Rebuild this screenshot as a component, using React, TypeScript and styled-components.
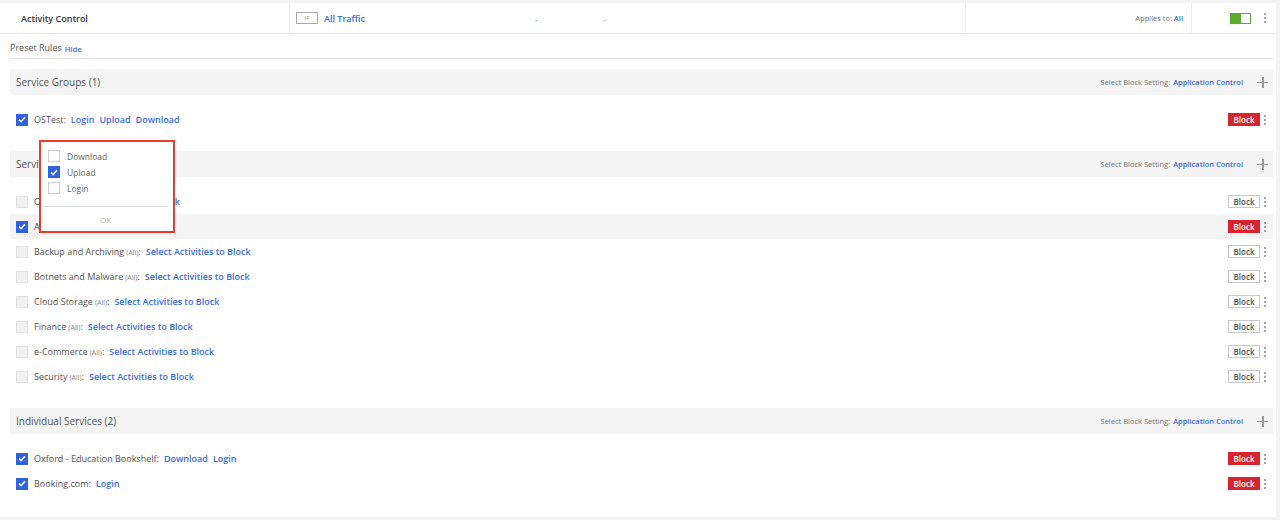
import React from "react";
import styled, { createGlobalStyle, css } from "styled-components";

const Global = createGlobalStyle`
  html, body { margin: 0; padding: 0; }
  body {
    background: #f3f3f3;
    font-family: "Open Sans", "Liberation Sans", sans-serif;
    color: #555;
  }
  * { box-sizing: border-box; }
`;

const BLUE = "#3a6ee8";

const Page = styled.div`
  width: 1280px;
  height: 520px;
  padding: 3px 4px 3px 0;
`;

const Card = styled.div`
  background: #fff;
  width: 1276px;
  height: 514px;
  overflow: hidden;
`;

const TopRow = styled.div`
  display: grid;
  grid-template-columns: 289px 676px 226px 85px;
  height: 31px;
  border-bottom: 1px solid #e9e9e9;
`;

const Cell = styled.div<{ $first?: boolean; $right?: boolean }>`
  display: flex;
  align-items: center;
  border-left: ${(p) => (p.$first ? "none" : "1px solid #efefef")};
  justify-content: ${(p) => (p.$right ? "flex-end" : "flex-start")};
`;

const Title = styled.div`
  font-size: 9px;
  font-weight: 600;
  color: #333;
  padding-left: 21px;
`;

const IfBox = styled.span`
  margin-left: 6px;
  width: 22px;
  height: 12px;
  border: 1px solid #aaa;
  font-size: 6px;
  color: #aaa;
  display: flex;
  align-items: center;
  justify-content: center;
`;

const Link = styled.span<{ $size?: number }>`
  color: ${BLUE};
  font-weight: 600;
  font-size: ${(p) => p.$size ?? 9}px;
`;

const Dash = styled.span<{ $gray?: boolean; $left: number }>`
  color: ${(p) => (p.$gray ? "#999" : BLUE)};
  font-size: 8px;
  margin-left: ${(p) => p.$left}px;
`;

const AppliesText = styled.span`
  font-size: 7.5px;
  color: #777;
  padding-right: 8px;
`;

const Toggle = styled.span`
  margin-left: 38px;
  width: 21px;
  height: 11px;
  border: 1px solid #5aac2e;
  background: linear-gradient(90deg, #5aac2e 0 55%, #fff 55% 100%);
`;

const Kebab = styled.span<{ $ml?: number }>`
  display: flex;
  flex-direction: column;
  gap: 2px;
  margin-left: ${(p) => p.$ml ?? 4}px;
  & > i {
    display: block;
    width: 2px;
    height: 2px;
    background: #888;
    border-radius: 1px;
  }
`;

const Dots = ({ ml }: { ml?: number }) => (
  <Kebab $ml={ml}>
    <i />
    <i />
    <i />
  </Kebab>
);

const Body = styled.div`
  padding: 0 3px 0 10px;
  position: relative;
`;

const Preset = styled.div`
  height: 25px;
  display: flex;
  align-items: flex-end;
  padding-bottom: 4px;
  font-size: 9px;
  color: #555;
  border-bottom: 1px solid #e6e6e6;
  gap: 3px;
`;

const Groups = styled.div`
  padding-top: 10px;
`;

const GroupHeader = styled.div`
  height: 26px;
  background: #f4f4f4;
  display: flex;
  align-items: center;
  padding: 0 5px 0 6px;
`;

const GroupTitle = styled.div`
  font-size: 10px;
  color: #555;
  flex: 1;
`;

const BlockSetting = styled.div`
  font-size: 7.5px;
  color: #777;
  display: flex;
  align-items: center;
  gap: 3px;
`;

const Plus = styled.span`
  margin-left: 14px;
  width: 11px;
  height: 11px;
  position: relative;
  &::before, &::after {
    content: "";
    position: absolute;
    background: #999;
  }
  &::before { left: 0; right: 0; top: 5px; height: 1.5px; }
  &::after { top: 0; bottom: 0; left: 5px; width: 1.5px; }
`;

const Rows = styled.div`
  padding: 12px 0 19px;
`;

const Row = styled.div<{ $shade?: boolean }>`
  height: 25px;
  display: flex;
  align-items: center;
  padding: 0 7px 0 6px;
  background: ${(p) => (p.$shade ? "#f4f4f4" : "transparent")};
`;

const Box = styled.span<{ $on?: boolean; $popup?: boolean }>`
  width: 12px;
  height: 12px;
  flex: none;
  display: flex;
  align-items: center;
  justify-content: center;
  ${(p) =>
    p.$on
      ? css`
          background: #2f62dc;
          border: 1px solid #2f62dc;
        `
      : p.$popup
      ? css`
          background: #fff;
          border: 1px solid #ccc;
        `
      : css`
          background: #f1f1f1;
          border: 1px solid #e2e2e2;
        `}
`;

const Check = () => (
  <svg width="8" height="7" viewBox="0 0 8 7">
    <path d="M1 3.6 L3.1 5.6 L7 1.2" fill="none" stroke="#fff" strokeWidth="1.6" />
  </svg>
);

const Label = styled.div`
  flex: 1;
  margin-left: 6px;
  font-size: 9px;
  color: #555;
  display: flex;
  align-items: baseline;
  gap: 5px;
  white-space: nowrap;
`;

const Name = styled.span`
  & > small {
    font-size: 7px;
    color: #888;
    margin-left: 2px;
  }
`;

const BlockBtn = styled.span<{ $on?: boolean }>`
  width: 32px;
  height: 13px;
  display: flex;
  align-items: center;
  justify-content: center;
  font-size: 8px;
  font-weight: 600;
  ${(p) =>
    p.$on
      ? css`
          background: #d9232d;
          color: #fff;
          border: 1px solid #d9232d;
        `
      : css`
          background: #fff;
          color: #555;
          border: 1px solid #c8c8c8;
        `}
`;

const Popup = styled.div`
  position: absolute;
  left: 39px;
  top: 106px;
  width: 136px;
  height: 93px;
  background: #fff;
  border: 2px solid #ee3b2b;
  padding: 6px 3px 0 7px;
  display: flex;
  flex-direction: column;
`;

const PopItem = styled.div`
  height: 16px;
  display: flex;
  align-items: center;
  gap: 7px;
  font-size: 8.5px;
  color: #666;
`;

const PopFooter = styled.div`
  margin-top: 10px;
  border-top: 1px solid #d8d8d8;
  margin-right: 2px;
  margin-left: -5px;
  flex: 1;
  display: flex;
  align-items: center;
  justify-content: center;
  font-size: 8px;
  color: #bbb;
`;

type RowData = {
  on?: boolean;
  shade?: boolean;
  name: string;
  all?: boolean;
  links: string[];
  block?: boolean;
};

const groups: { title: string; rows: RowData[] }[] = [
  {
    title: "Service Groups (1)",
    rows: [{ on: true, name: "OSTest", links: ["Login", "Upload", "Download"], block: true }],
  },
  {
    title: "Service Categories (8)",
    rows: [
      { name: "Chat", all: true, links: ["Select Activities to Block"] },
      { on: true, shade: true, name: "Ads", all: true, links: ["Upload"], block: true },
      { name: "Backup and Archiving", all: true, links: ["Select Activities to Block"] },
      { name: "Botnets and Malware", all: true, links: ["Select Activities to Block"] },
      { name: "Cloud Storage", all: true, links: ["Select Activities to Block"] },
      { name: "Finance", all: true, links: ["Select Activities to Block"] },
      { name: "e-Commerce", all: true, links: ["Select Activities to Block"] },
      { name: "Security", all: true, links: ["Select Activities to Block"] },
    ],
  },
  {
    title: "Individual Services (2)",
    rows: [
      { on: true, name: "Oxford - Education Bookshelf", links: ["Download", "Login"], block: true },
      { on: true, name: "Booking.com", links: ["Login"], block: true },
    ],
  },
];

export default function App() {
  return (
    <>
      <Global />
      <Page>
        <Card>
          <TopRow>
            <Cell $first>
              <Title>Activity Control</Title>
            </Cell>
            <Cell>
              <IfBox>IF</IfBox>
              <Link $size={9} style={{ marginLeft: 6 }}>All Traffic</Link>
              <Dash $left={170}>-</Dash>
              <Dash $gray $left={66}>-</Dash>
            </Cell>
            <Cell $right>
              <AppliesText>
                Applies to: <Link $size={7.5}>All</Link>
              </AppliesText>
            </Cell>
            <Cell>
              <Toggle />
              <Dots ml={13} />
            </Cell>
          </TopRow>
          <Body>
            <Preset>
              Preset Rules <Link $size={7.5}>Hide</Link>
            </Preset>
            <Groups>
              {groups.map((g) => (
                <div key={g.title}>
                  <GroupHeader>
                    <GroupTitle>{g.title}</GroupTitle>
                    <BlockSetting>
                      Select Block Setting: <Link $size={7.5}>Application Control</Link>
                    </BlockSetting>
                    <Plus />
                  </GroupHeader>
                  <Rows>
                    {g.rows.map((r, i) => (
                      <Row key={i} $shade={r.shade}>
                        <Box $on={r.on}>{r.on && <Check />}</Box>
                        <Label>
                          <Name>
                            {r.name}
                            {r.all && <small>(All)</small>}:
                          </Name>
                          {r.links.map((l) => (
                            <Link key={l}>{l}</Link>
                          ))}
                        </Label>
                        <BlockBtn $on={r.block}>Block</BlockBtn>
                        <Dots />
                      </Row>
                    ))}
                  </Rows>
                </div>
              ))}
            </Groups>
            <Popup>
              <PopItem>
                <Box $popup />
                Download
              </PopItem>
              <PopItem>
                <Box $on>
                  <Check />
                </Box>
                Upload
              </PopItem>
              <PopItem>
                <Box $popup />
                Login
              </PopItem>
              <PopFooter>OK</PopFooter>
            </Popup>
          </Body>
        </Card>
      </Page>
    </>
  );
}
